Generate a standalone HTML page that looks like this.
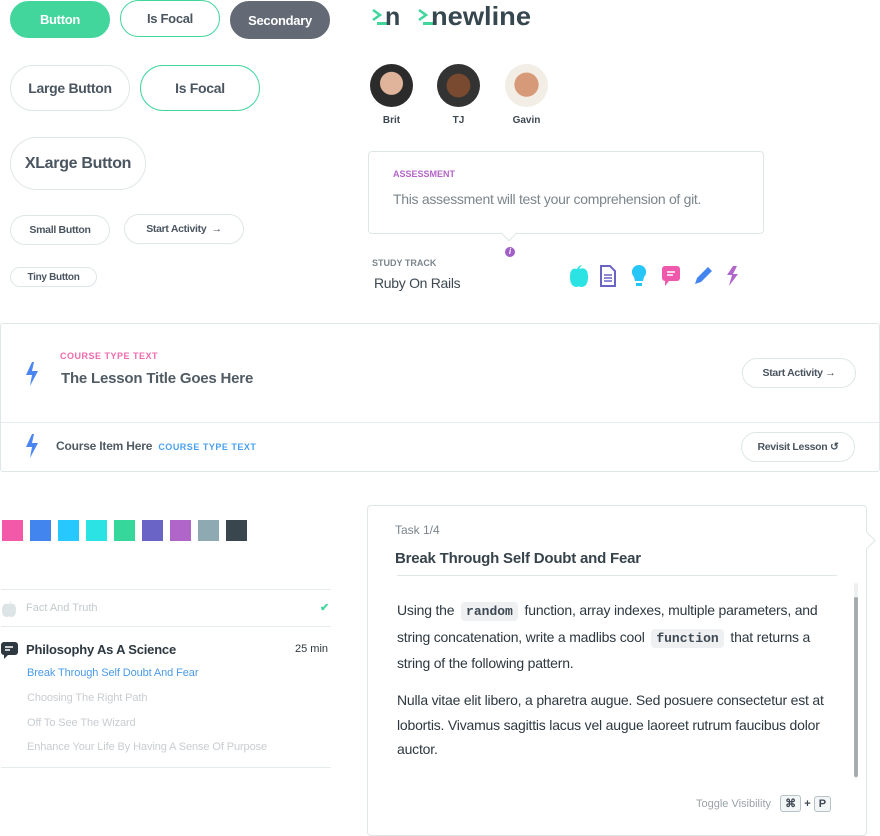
<!DOCTYPE html>
<html><head><meta charset="utf-8"><style>
*{box-sizing:border-box;margin:0;padding:0}
body{width:880px;height:836px;position:relative;background:#fff;font-family:"Liberation Sans",sans-serif;color:#3d4852;overflow:hidden}
.a{position:absolute}
.btn{position:absolute;border:1px solid #dfe6e8;border-radius:999px;display:flex;align-items:center;justify-content:center;font-weight:bold;color:#4a5560;background:#fff;letter-spacing:-0.3px}
.sw{position:absolute;top:520px;width:21px;height:21px}
.hr{position:absolute;height:1px;background:#e6ecee}
code{font-family:"Liberation Mono",monospace;font-weight:bold;background:#eef0f2;border-radius:4px;padding:2px 5px;font-size:13px;color:#3d4852;letter-spacing:0;margin:0 3px}
.kbd{display:inline-block;border:1px solid #b6c2c8;border-radius:3px;background:#f3f6f7;font-size:11px;font-weight:bold;padding:1px 4px;color:#3d4852}
.p{white-space:nowrap;font-size:14px;line-height:24.5px;color:#2d3840;letter-spacing:-0.2px}
</style></head><body>
<!-- buttons -->
<div class="btn" style="left:10px;top:1px;width:100px;height:37px;background:#42d69d;border-color:#42d69d;color:#fff;font-size:13px">Button</div>
<div class="btn" style="left:120px;top:0;width:100px;height:37px;border-color:#42d69d;font-size:13px">Is Focal</div>
<div class="btn" style="left:230px;top:1px;width:100px;height:38px;background:#636a75;border-color:#636a75;color:#fff;font-size:13px">Secondary</div>
<div class="btn" style="left:10px;top:65px;width:120px;height:46px;font-size:14px">Large Button</div>
<div class="btn" style="left:140px;top:65px;width:120px;height:46px;border-color:#42d69d;font-size:14px">Is Focal</div>
<div class="btn" style="left:10px;top:137px;width:136px;height:53px;font-size:16px">XLarge Button</div>
<div class="btn" style="left:10px;top:215px;width:100px;height:30px;font-size:10.5px">Small Button</div>
<div class="btn" style="left:124px;top:214px;width:120px;height:30px;font-size:10.5px">Start Activity&nbsp;&nbsp;→</div>
<div class="btn" style="left:10px;top:267px;width:87px;height:20px;font-size:10px">Tiny Button</div>
<!-- logo -->
<svg class="a" style="left:370px;top:0" width="175" height="32" viewBox="0 0 175 32">
<path d="M3 10 l7 5 l-7 5" fill="none" stroke="#42d69d" stroke-width="2.6"/><rect x="7" y="22" width="12" height="3" fill="#42d69d"/>
<path d="M49 10 l7 5 l-7 5" fill="none" stroke="#42d69d" stroke-width="2.6"/><rect x="53" y="22" width="12" height="3" fill="#42d69d"/>
<text x="15" y="25" font-family="Liberation Sans" font-weight="bold" font-size="25" fill="#37474f">n</text>
<text x="61" y="25" font-family="Liberation Sans" font-weight="bold" font-size="26" fill="#37474f" textLength="100" lengthAdjust="spacingAndGlyphs">newline</text>
</svg>
<!-- avatars -->
<div class="a" style="left:370px;top:64px;width:43px;height:43px;border-radius:50%;background:radial-gradient(circle at 50% 45%,#e0b49a 0 35%,#2b2b2b 37%)"></div>
<div class="a" style="left:437px;top:64px;width:43px;height:43px;border-radius:50%;background:radial-gradient(circle at 50% 50%,#7a4a30 0 38%,#333 40%)"></div>
<div class="a" style="left:505px;top:64px;width:43px;height:43px;border-radius:50%;background:radial-gradient(circle at 50% 48%,#d69a78 0 38%,#f2eee6 40%)"></div>
<div class="a" style="left:370px;top:115px;width:43px;text-align:center;font-size:10px;font-weight:bold">Brit</div>
<div class="a" style="left:437px;top:115px;width:43px;text-align:center;font-size:10px;font-weight:bold">TJ</div>
<div class="a" style="left:505px;top:115px;width:43px;text-align:center;font-size:10px;font-weight:bold">Gavin</div>
<!-- assessment -->
<div class="a" style="left:368px;top:151px;width:396px;height:83px;border:1px solid #dfe6e8;border-radius:4px"></div>
<div class="a" style="left:503px;top:227px;width:12px;height:12px;background:#fff;border-right:1px solid #dfe6e8;border-bottom:1px solid #dfe6e8;transform:rotate(45deg)"></div>
<div class="a" style="left:393px;top:169px;font-size:9px;font-weight:bold;color:#b466c8">ASSESSMENT</div>
<div class="a" style="left:393px;top:191px;font-size:14px;color:#7b858c;letter-spacing:-0.3px">This assessment will test your comprehension of git.</div>
<div class="a" style="left:505px;top:247px;width:10px;height:10px;border-radius:50%;background:#a25ec8;color:#fff;font-size:8px;font-weight:bold;text-align:center;line-height:10px;font-style:italic">i</div>
<div class="a" style="left:372px;top:258px;font-size:9px;font-weight:bold;color:#7b858c">STUDY TRACK</div>
<div class="a" style="left:374px;top:275px;font-size:14px;color:#3d4852;letter-spacing:-0.3px">Ruby On Rails</div>
<!-- icons -->
<svg class="a" style="left:566px;top:263px" width="182" height="26" viewBox="0 0 182 26">
<path d="M11 6 q2-4 5-4 q-2 2-3 4 q9-3 9 8 q0 10-7 10 q-2-1-4 0 q-7 0-7-10 q0-10 7-8z" fill="#2ce3e3"/>
<path d="M35 3 h9 l5 5 v15 h-14z" fill="none" stroke="#6a64c6" stroke-width="2"/><path d="M38 12h8M38 15h8M38 18h8" stroke="#6a64c6" stroke-width="1.6"/>
<path d="M73 2 a7 7 0 0 1 5 12 l-1 4 h-8 l-1-4 a7 7 0 0 1 5-12z M70 20 h6 v3 h-6z" fill="#27c6f8"/>
<rect x="96" y="3" width="18" height="15" rx="3" fill="#ef59ac"/><path d="M99 18 v5 l4-5z" fill="#ef59ac"/><path d="M101 9h8M101 12h6" stroke="#fff" stroke-width="1.6"/>
<path d="M129 21 l2-6 l11-11 l4 4 l-11 11z" fill="#4484ee"/>
<path d="M167 3 l-6 9 h5 l-3 11 l9-12 h-5 l4-8z" fill="#b066c8"/>
</svg>
<!-- course card -->
<div class="a" style="left:0;top:323px;width:880px;height:149px;border:1px solid #dfe6e8;border-radius:3px"></div>
<div class="hr" style="left:1px;top:422px;width:878px"></div>
<svg class="a" style="left:23px;top:361px" width="18" height="26" viewBox="0 0 18 26"><path d="M9 1 L3 14 h6 l-2 11 l8-15 h-6 l2-9z" fill="#4a86ee"/></svg>
<div class="a" style="left:60px;top:351px;font-size:9px;font-weight:bold;color:#ef6aac;letter-spacing:.5px">COURSE TYPE TEXT</div>
<div class="a" style="left:61px;top:370px;font-size:15px;font-weight:bold;color:#505b64;letter-spacing:-0.2px">The Lesson Title Goes Here</div>
<div class="btn" style="left:742px;top:358px;width:114px;height:30px;font-size:10.5px">Start Activity&nbsp;→</div>
<svg class="a" style="left:23px;top:433px" width="18" height="26" viewBox="0 0 18 26"><path d="M9 1 L3 14 h6 l-2 11 l8-15 h-6 l2-9z" fill="#4a86ee"/></svg>
<div class="a" style="left:56px;top:439px;font-size:12px;font-weight:bold;color:#505b64;letter-spacing:-0.2px">Course Item Here <span style="font-size:9px;color:#4aa0ee;letter-spacing:.5px;margin-left:3px">COURSE TYPE TEXT</span></div>
<div class="btn" style="left:741px;top:432px;width:114px;height:30px;font-size:10.5px">Revisit Lesson&nbsp;↺</div>
<!-- swatches -->
<div class="sw" style="left:2px;background:#f25aa9"></div>
<div class="sw" style="left:30px;background:#4385ef"></div>
<div class="sw" style="left:58px;background:#27c8fd"></div>
<div class="sw" style="left:86px;background:#2ce3e3"></div>
<div class="sw" style="left:114px;background:#36d79b"></div>
<div class="sw" style="left:142px;background:#6a64c6"></div>
<div class="sw" style="left:170px;background:#b066c8"></div>
<div class="sw" style="left:198px;background:#8fa9b2"></div>
<div class="sw" style="left:226px;background:#3a464e"></div>
<!-- list -->
<div class="hr" style="left:1px;top:589px;width:330px"></div>
<svg class="a" style="left:1px;top:600px" width="16" height="17" viewBox="0 0 16 17"><path d="M8 4 q1-3 3-3 q-1 1-2 3 q6-2 6 6 q0 7-5 7 q-2-1-4 0 q-5 0-5-7 q0-8 7-6z" fill="#dde4e6"/></svg>
<div class="a" style="left:26px;top:602px;font-size:11px;color:#c3c9cd">Fact And Truth</div>
<div class="a" style="left:320px;top:601px;font-size:11px;color:#42d69d;font-weight:bold">✔</div>
<div class="hr" style="left:1px;top:626px;width:330px"></div>
<svg class="a" style="left:1px;top:642px" width="18" height="18" viewBox="0 0 18 18"><rect x="0" y="0" width="17" height="13" rx="3" fill="#2d3840"/><path d="M3 12v5l4-4z" fill="#2d3840"/><path d="M4 5h8M4 8h5" stroke="#fff" stroke-width="1.5"/></svg>
<div class="a" style="left:26px;top:642px;font-size:13px;font-weight:bold;color:#2d3840;letter-spacing:-0.2px">Philosophy As A Science</div>
<div class="a" style="left:295px;top:643px;font-size:11px;color:#2d3840">25 min</div>
<div class="a" style="left:27px;top:667px;font-size:11px;color:#4a9ae8;letter-spacing:-0.1px">Break Through Self Doubt And Fear</div>
<div class="a" style="left:27px;top:692px;font-size:11px;color:#c8cdd1;letter-spacing:-0.1px">Choosing The Right Path</div>
<div class="a" style="left:27px;top:717px;font-size:11px;color:#c8cdd1;letter-spacing:-0.1px">Off To See The Wizard</div>
<div class="a" style="left:27px;top:741px;font-size:11px;color:#c8cdd1;letter-spacing:-0.1px">Enhance Your Life By Having A Sense Of Purpose</div>
<div class="hr" style="left:1px;top:767px;width:330px"></div>
<!-- task card -->
<div class="a" style="left:367px;top:505px;width:500px;height:331px;border:1px solid #dfe6e8;border-radius:4px"></div>
<div class="a" style="left:860px;top:534px;width:13px;height:13px;background:#fff;border-top:1px solid #dfe6e8;border-right:1px solid #dfe6e8;transform:rotate(45deg)"></div>
<div class="a" style="left:395px;top:523px;font-size:12px;color:#7b858c">Task 1/4</div>
<div class="a" style="left:395px;top:550px;font-size:15px;font-weight:bold;color:#37434b;letter-spacing:-0.2px">Break Through Self Doubt and Fear</div>
<div class="hr" style="left:397px;top:575px;width:440px;background:#dfe6e8"></div>
<div class="a" style="left:854px;top:583px;width:4px;height:196px;background:#eef0f1;border-radius:2px"></div>
<div class="a" style="left:854px;top:597px;width:4px;height:180px;background:#a6abae;border-radius:2px"></div>
<div class="a p" style="left:397px;top:598px">Using the <code>random</code> function, array indexes, multiple parameters, and<br>string concatenation, write a madlibs cool <code>function</code> that returns a<br>string of the following pattern.</div>
<div class="a p" style="left:397px;top:688px">Nulla vitae elit libero, a pharetra augue. Sed posuere consectetur est at<br>lobortis. Vivamus sagittis lacus vel augue laoreet rutrum faucibus dolor<br>auctor.</div>
<div class="a" style="left:696px;top:795px;font-size:11px;color:#9aa3a8">Toggle Visibility&nbsp;&nbsp;&nbsp;<span class="kbd">⌘</span> <b style="color:#3d4852">+</b> <span class="kbd">P</span></div>
</body></html>
